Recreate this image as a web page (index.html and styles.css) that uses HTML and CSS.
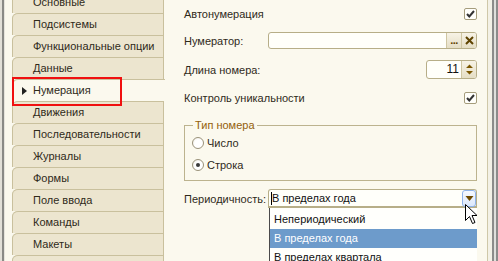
FILE: index.html
```html
<!DOCTYPE html>
<html>
<head>
<meta charset="utf-8">
<link rel="stylesheet" href="styles.css">
</head>
<body>
<div class="window">
  <div class="edge-left"></div>
  <nav class="tabs">
    <div class="tab">Основные</div>
    <div class="tab">Подсистемы</div>
    <div class="tab">Функциональные опции</div>
    <div class="tab">Данные</div>
    <div class="tab active"><span class="arrow"></span>Нумерация</div>
    <div class="tab">Движения</div>
    <div class="tab">Последовательности</div>
    <div class="tab">Журналы</div>
    <div class="tab">Формы</div>
    <div class="tab">Поле ввода</div>
    <div class="tab">Команды</div>
    <div class="tab">Макеты</div>
    <div class="tab"></div>
  </nav>
  <main class="content">
    <div class="row r1">
      <span class="label grow">Автонумерация</span>
      <span class="check"><svg width="11" height="10" viewBox="0 0 11 10"><path d="M2 5 L4.3 7.5 L9 2" fill="none" stroke="#333" stroke-width="2"/></svg></span>
    </div>
    <div class="row r2">
      <span class="label">Нумератор:</span>
      <div class="field">
        <span class="input"></span>
        <span class="btn dots">...</span>
        <span class="btn clear"><svg width="9" height="9" viewBox="0 0 9 9"><path d="M1 1 L8 8 M8 1 L1 8" stroke="#5e4300" stroke-width="2"/></svg></span>
      </div>
    </div>
    <div class="row r3">
      <span class="label grow">Длина номера:</span>
      <div class="spin">
        <span class="val">11</span>
        <span class="btn spinbtn"><svg width="9" height="13" viewBox="0 0 9 13"><path d="M4.5 1.5 L8 5 L1 5 Z M1 8 L8 8 L4.5 11.5 Z" fill="#7a5600"/></svg></span>
      </div>
    </div>
    <div class="row r4">
      <span class="label grow">Контроль уникальности</span>
      <span class="check"><svg width="11" height="10" viewBox="0 0 11 10"><path d="M2 5 L4.3 7.5 L9 2" fill="none" stroke="#333" stroke-width="2"/></svg></span>
    </div>
    <fieldset class="group">
      <legend>Тип номера</legend>
      <div class="radio-row"><span class="radio"></span>Число</div>
      <div class="radio-row"><span class="radio on"></span>Строка</div>
    </fieldset>
    <div class="row r5">
      <span class="label">Периодичность:</span>
      <div class="combo">
        <span class="combo-text"><span class="caret"></span>В пределах года</span>
        <span class="drop"><svg width="9" height="7" viewBox="0 0 9 7"><path d="M0.5 1 L8.5 1 L4.5 6 Z" fill="#6e4a00"/></svg></span>
        <div class="list">
          <div class="item">Непериодический</div>
          <div class="item sel">В пределах года</div>
          <div class="item">В пределах квартала</div>
        </div>
      </div>
    </div>
  </main>
  <div class="edge-right"></div>
</div>
<div class="mark"></div>
<svg class="pointer" width="13" height="21" viewBox="0 0 13 21"><path d="M0.5 0.5 L0.5 16.5 L4.5 12.5 L7.5 19.5 L10 18.5 L7 11.5 L12 11.5 Z" fill="#fff" stroke="#000" stroke-width="1"/></svg>
</body>
</html>
```
FILE: styles.css
```css
* { box-sizing: border-box; }
html, body { margin: 0; padding: 0; }
body {
  width: 498px;
  height: 261px;
  overflow: hidden;
  position: relative;
  background: #fbf9ee;
  font-family: "Liberation Sans", Arial, sans-serif;
  font-size: 11px;
  color: #2f2a1a;
}
.window { display: flex; height: 261px; }
.edge-left {
  width: 5px;
  flex: none;
  background: linear-gradient(to right, #e2e0d8 0 2px, #8a8a86 2px 4px, #e6e4dc 4px 5px);
}
.tabs {
  width: 159px;
  flex: none;
  padding-left: 7px;
  margin-top: -9px;
  display: flex;
  flex-direction: column;
}
.tab {
  height: 22px;
  flex: none;
  border: 1px solid #c9c09d;
  border-bottom: none;
  border-top-left-radius: 6px 5px;
  background: #ece5cf;
  padding-left: 20px;
  line-height: 21px;
  white-space: nowrap;
}
.tab.active {
  background: #fbf9ee;
  border-right: none;
  margin-right: -1px;
  padding-left: 9px;
  display: flex;
  align-items: center;
}
.arrow {
  width: 0;
  height: 0;
  border-left: 5px solid #222;
  border-top: 4.5px solid transparent;
  border-bottom: 4.5px solid transparent;
  margin-right: 6px;
}
.content {
  width: 323px;
  flex: none;
  padding: 2px 10px 0 20px;
  display: flex;
  flex-direction: column;
}
.edge-right {
  width: 11px;
  flex: none;
  background: linear-gradient(to right, #cfc8a8 0 1px, #f3f1e6 1px 5px, #8c8c8a 5px 7px, #e0e0dc 7px 9px, #8c8c8a 9px 11px);
}
.row { display: flex; align-items: center; flex: none; }
.r1 { height: 24px; }
.r2 { height: 29px; }
.r3 { height: 29px; }
.r4 { height: 27px; }
.r5 { height: 19px; margin-top: 8px; }
.label { width: 84px; flex: none; white-space: nowrap; }
.grow { flex: 1; }
.check {
  width: 13px;
  height: 12px;
  border: 1px solid #a59d7c;
  border-radius: 2px;
  background: #fffffb;
  display: flex;
  align-items: center;
  justify-content: center;
}
.field {
  flex: 1;
  height: 17px;
  display: flex;
  border: 1px solid #b7ae88;
  border-radius: 3px;
  background: #fffffa;
  overflow: hidden;
}
.input { flex: 1; }
.btn {
  width: 15px;
  flex: none;
  border-left: 1px solid #cfc6a2;
  background: linear-gradient(#f7f3e6, #e5dec5);
  display: flex;
  align-items: center;
  justify-content: center;
  color: #5e4300;
}
.dots {
  font-weight: bold;
  font-size: 11px;
  line-height: 11px;
  align-items: flex-end;
  padding-bottom: 2px;
  letter-spacing: -0.5px;
}
.spin {
  width: 51px;
  height: 19px;
  display: flex;
  border: 1px solid #b7ae88;
  border-radius: 3px;
  background: #fffffa;
  overflow: hidden;
}
.val {
  flex: 1;
  text-align: right;
  padding-right: 2px;
  line-height: 17px;
  font-size: 12px;
  color: #111;
}
.group {
  margin: 7px 0 0 0;
  padding: 0 0 4px 8px;
  border: 1px solid #bcb38e;
  min-width: 0;
}
.group legend {
  padding: 0 2px;
  color: #94600a;
  line-height: 14px;
}
.radio-row {
  height: 22px;
  display: flex;
  align-items: center;
  margin-left: -1px;
}
.radio {
  width: 12px;
  height: 12px;
  border-radius: 50%;
  border: 1px solid #9a927a;
  background: radial-gradient(circle at 60% 60%, #ffffff 0 50%, #ece8dc 100%);
  margin-right: 3px;
  display: flex;
  align-items: center;
  justify-content: center;
}
.radio.on::after {
  content: "";
  width: 4px;
  height: 4px;
  border-radius: 50%;
  background: #3a3a3a;
}
.combo {
  flex: 1;
  height: 19px;
  position: relative;
  display: flex;
  align-items: center;
  border: 1px solid #b7ae88;
  border-bottom-width: 2px;
  border-radius: 3px 3px 0 0;
  background: #fffffa;
}
.combo-text {
  flex: 1;
  display: flex;
  align-items: center;
  padding-left: 2px;
  white-space: nowrap;
  color: #111;
}
.caret { width: 1px; height: 13px; background: #000; margin-right: 0; }
.drop {
  width: 14px;
  height: 17px;
  flex: none;
  border: 1px solid #8fb3ea;
  border-radius: 3px;
  background: linear-gradient(#f6f9ff, #dbe7fb);
  display: flex;
  align-items: center;
  justify-content: center;
}
.list {
  position: absolute;
  top: 100%;
  left: 0;
  right: -1px;
  margin-top: 2px;
  padding-top: 2px;
  background: #fffffc;
  border-left: 1px solid #4a4a4a;
  height: 60px;
}
.item {
  height: 19px;
  line-height: 19px;
  padding-left: 4px;
  color: #111;
  white-space: nowrap;
}
.item.sel { background: #6d9bcb; color: #fff; }
.mark {
  position: absolute;
  left: 12px;
  top: 77px;
  width: 110px;
  height: 29px;
  border: 2px solid #f01010;
}
.pointer {
  position: absolute;
  left: 465px;
  top: 204px;
}
```
